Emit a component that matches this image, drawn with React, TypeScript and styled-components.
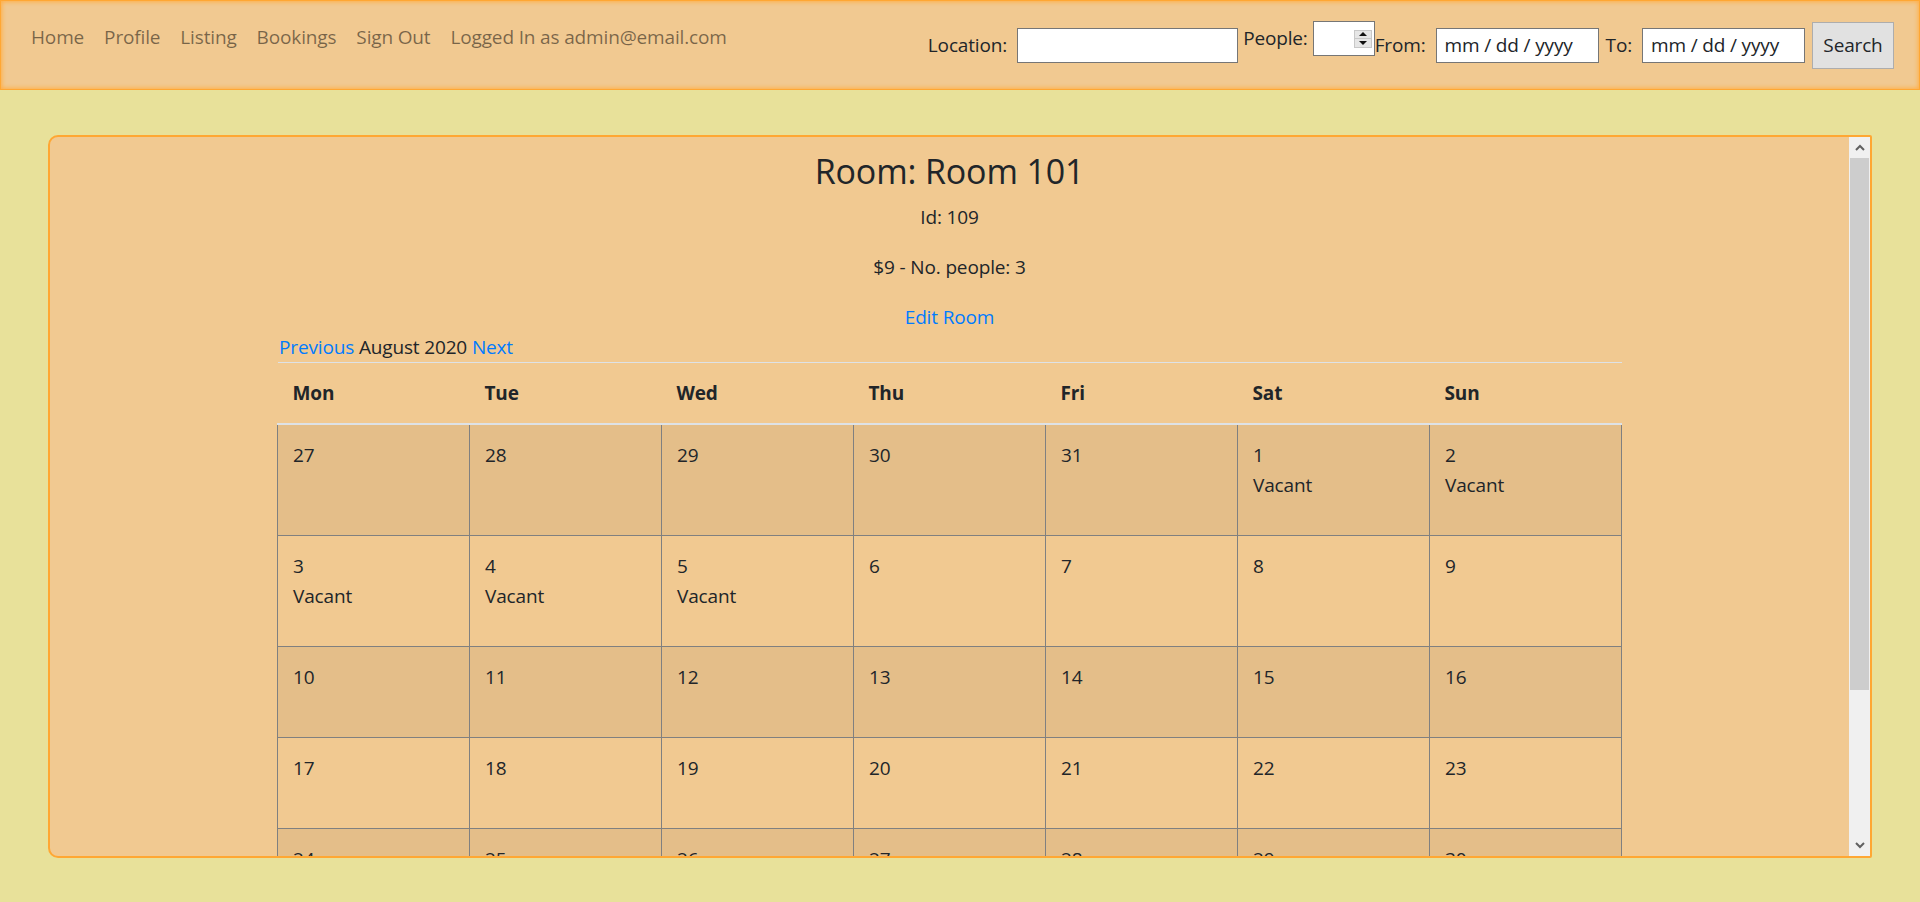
import React from "react"
import styled, { createGlobalStyle } from "styled-components"

const weeks: { day: number; vacant?: boolean }[][] = [
  [{ day: 27 }, { day: 28 }, { day: 29 }, { day: 30 }, { day: 31 }, { day: 1, vacant: true }, { day: 2, vacant: true }],
  [{ day: 3, vacant: true }, { day: 4, vacant: true }, { day: 5, vacant: true }, { day: 6 }, { day: 7 }, { day: 8 }, { day: 9 }],
  [{ day: 10 }, { day: 11 }, { day: 12 }, { day: 13 }, { day: 14 }, { day: 15 }, { day: 16 }],
  [{ day: 17 }, { day: 18 }, { day: 19 }, { day: 20 }, { day: 21 }, { day: 22 }, { day: 23 }],
  [{ day: 24 }, { day: 25 }, { day: 26 }, { day: 27 }, { day: 28 }, { day: 29 }, { day: 30 }],
  [{ day: 31 }, { day: 1 }, { day: 2 }, { day: 3 }, { day: 4 }, { day: 5 }, { day: 6 }],
]

const days = ["Mon", "Tue", "Wed", "Thu", "Fri", "Sat", "Sun"]

function App() {
  return (
    <Page>
      <GlobalStyle />
      <Navbar>
        <NavList>
          <NavLink href="#">Home</NavLink>
          <NavLink href="#">Profile</NavLink>
          <NavLink href="#">Listing</NavLink>
          <NavLink href="#">Bookings</NavLink>
          <NavLink href="#">Sign Out</NavLink>
          <NavLink href="#">Logged In as admin@email.com</NavLink>
        </NavList>
        <SearchForm>
          <Label>Location:</Label>
          <TextInput width={221} />
          <PeopleGroup>
            <Label>People:</Label>
            <SpinWrap>
              <TextInput width={62} />
              <Spinner>
                <SpinHalf><ArrowUp /></SpinHalf>
                <SpinHalf><ArrowDown /></SpinHalf>
              </Spinner>
            </SpinWrap>
          </PeopleGroup>
          <Label tight>From:</Label>
          <TextInput width={163} placeholder="mm / dd / yyyy" />
          <Label>To:</Label>
          <TextInput width={163} placeholder="mm / dd / yyyy" />
          <SearchButton>Search</SearchButton>
        </SearchForm>
      </Navbar>
      <Main>
        <Card>
          <Scroller>
            <Container>
              <RoomTitle>Room: Room 101</RoomTitle>
              <Info>Id: 109</Info>
              <Info>$9 - No. people: 3</Info>
              <Centered>
                <Link href="#">Edit Room</Link>
              </Centered>
              <MonthNav>
                <Link href="#">Previous</Link> August 2020 <Link href="#">Next</Link>
              </MonthNav>
              <Calendar>
                <thead>
                  <tr>
                    {days.map((d) => (
                      <HeadCell key={d}>{d}</HeadCell>
                    ))}
                  </tr>
                </thead>
                <tbody>
                  {weeks.map((week, i) => (
                    <WeekRow key={i} striped={i % 2 === 0}>
                      {week.map((c, j) => (
                        <DayCell key={j}>
                          {c.day}
                          {c.vacant && <Vacant>Vacant</Vacant>}
                        </DayCell>
                      ))}
                    </WeekRow>
                  ))}
                </tbody>
              </Calendar>
            </Container>
          </Scroller>
          <Rail>
            <RailButton>
              <svg width="10" height="7" viewBox="0 0 10 7">
                <path d="M1 6 L5 2 L9 6" fill="none" stroke="#606060" strokeWidth="2" />
              </svg>
            </RailButton>
            <Track>
              <Thumb />
            </Track>
            <RailButton>
              <svg width="10" height="7" viewBox="0 0 10 7">
                <path d="M1 1 L5 5 L9 1" fill="none" stroke="#606060" strokeWidth="2" />
              </svg>
            </RailButton>
          </Rail>
        </Card>
      </Main>
    </Page>
  )
}

export default App

const GlobalStyle = createGlobalStyle`
  * { box-sizing: border-box; }
  html, body { margin: 0; padding: 0; }
  body {
    background: #e8e19a;
    font-family: "Segoe UI", "Open Sans", "Liberation Sans", sans-serif;
    font-size: 19px;
    letter-spacing: -0.15px;
    line-height: 30px;
    color: #212529;
  }
`

const Page = styled.div`
  display: flex;
  flex-direction: column;
  height: 902px;
`

const Navbar = styled.nav`
  display: flex;
  justify-content: space-between;
  height: 90px;
  padding: 0 25px 0 20px;
  background: #f1c991;
  border: 1px solid #ffa733;
  box-shadow: inset 0 0 4px 1px #ffae45;
`

const NavList = styled.div`
  display: flex;
  align-self: flex-start;
  margin-top: 21px;
`

const NavLink = styled.a`
  padding: 0 10px;
  line-height: 30px;
  color: rgba(0, 0, 0, 0.5);
  text-decoration: none;
`

const SearchForm = styled.div`
  display: flex;
  align-items: center;
`

const Label = styled.span<{ tight?: boolean }>`
  line-height: 30px;
  margin: 0 10px 0 ${(p) => (p.tight ? 0 : 7)}px;
`

const TextInput = styled.input<{ width: number }>`
  width: ${(p) => p.width}px;
  height: 35px;
  border: 1px solid #767676;
  background: #fff;
  padding: 0 8px;
  font-family: inherit;
  font-size: 19px;
  letter-spacing: -0.15px;
  color: #212529;
  outline: none;
  &::placeholder {
    color: #212529;
    opacity: 1;
  }
`

const PeopleGroup = styled.div`
  display: flex;
  align-items: center;
  margin-bottom: 14px;
  & > span {
    margin: 0 5px 0 5px;
  }
`

const SpinWrap = styled.div`
  position: relative;
  display: flex;
`

const Spinner = styled.div`
  position: absolute;
  top: 9px;
  right: 3px;
  width: 18px;
  height: 18px;
  display: flex;
  flex-direction: column;
  border: 1px solid #c8c8c8;
`

const SpinHalf = styled.div`
  flex: 1;
  display: flex;
  align-items: center;
  justify-content: center;
  background: #e6e6e6;
  & + & {
    border-top: 1px solid #c8c8c8;
  }
`

const ArrowUp = styled.div`
  width: 0;
  height: 0;
  border-left: 4px solid transparent;
  border-right: 4px solid transparent;
  border-bottom: 4px solid #111;
`

const ArrowDown = styled.div`
  width: 0;
  height: 0;
  border-left: 4px solid transparent;
  border-right: 4px solid transparent;
  border-top: 4px solid #111;
`

const SearchButton = styled.button`
  width: 82px;
  height: 47px;
  margin-left: 7px;
  background: #e1e1e1;
  border: 1px solid #adadad;
  font-family: inherit;
  font-size: 19px;
  letter-spacing: -0.15px;
  color: #212529;
  padding: 0;
`

const Main = styled.main`
  flex: 1;
  display: flex;
  min-height: 0;
  padding: 45px 48px 44px;
`

const Card = styled.div`
  flex: 1;
  display: flex;
  background: #f1c991;
  border: 2px solid #ffa733;
  border-radius: 10px 2px 2px 10px;
  overflow: hidden;
`

const Scroller = styled.div`
  flex: 1;
  overflow-y: auto;
  scrollbar-width: none;
`

const Rail = styled.div`
  width: 21px;
  display: flex;
  flex-direction: column;
  background: #f0f0f0;
`

const RailButton = styled.div`
  height: 21px;
  display: flex;
  align-items: center;
  justify-content: center;
`

const Track = styled.div`
  flex: 1;
  padding: 0 1px;
`

const Thumb = styled.div`
  height: 532px;
  background: #cdcdcd;
`

const Container = styled.div`
  width: 1345px;
  margin: 0 auto;
  padding: 13px 0 24px;
`

const RoomTitle = styled.h3`
  margin: 0 0 10px;
  font-size: 34px;
  font-weight: 400;
  line-height: 42px;
  text-align: center;
`

const Info = styled.p`
  margin: 0 0 20px;
  text-align: center;
`

const Centered = styled.div`
  text-align: center;
`

const Link = styled.a`
  color: #007bff;
  text-decoration: none;
`

const MonthNav = styled.div`
  padding-left: 2px;
`

const Calendar = styled.table`
  width: 100%;
  table-layout: fixed;
  border-collapse: collapse;
  margin-bottom: 20px;
`

const HeadCell = styled.th`
  padding: 15px;
  text-align: left;
  font-weight: 700;
  border-top: 1px solid #dee2e6;
  border-bottom: 2px solid #dee2e6;
`

const WeekRow = styled.tr<{ striped: boolean }>`
  background: ${(p) => (p.striped ? "rgba(0, 0, 0, 0.05)" : "transparent")};
`

const DayCell = styled.td`
  box-sizing: content-box;
  height: 60px;
  padding: 15px;
  vertical-align: top;
  border: 1px solid #808080;
`

const Vacant = styled.p`
  margin: 0 0 20px;
`
